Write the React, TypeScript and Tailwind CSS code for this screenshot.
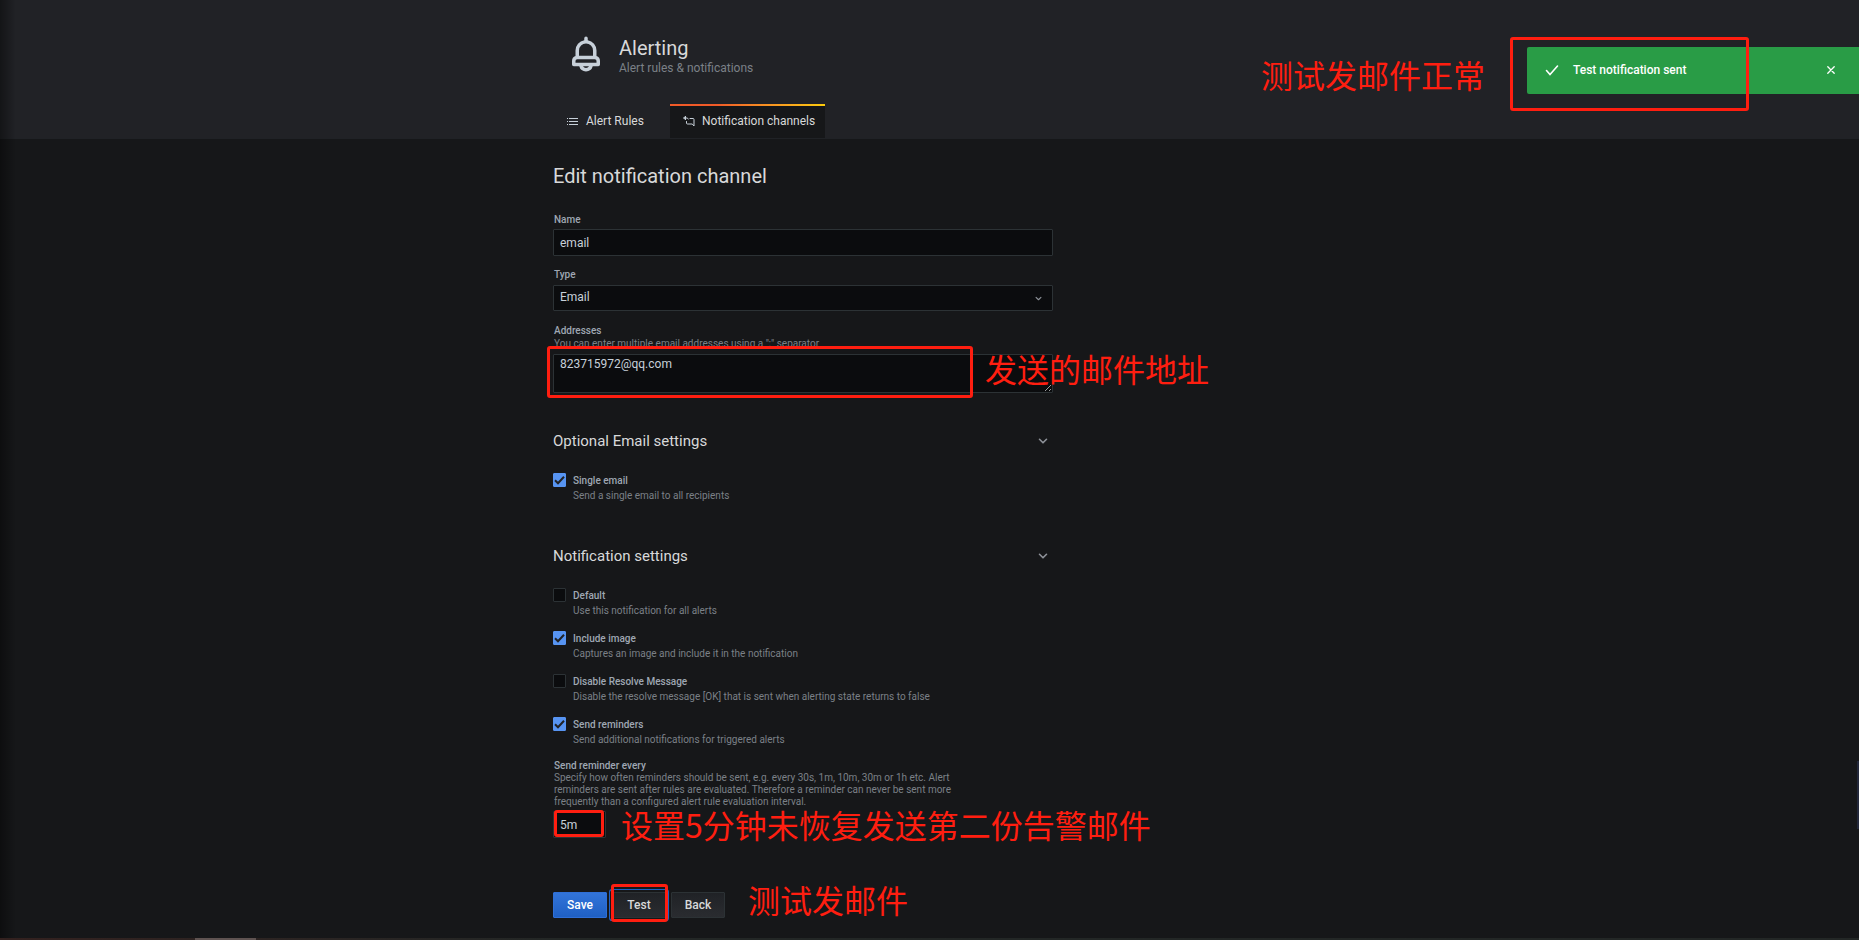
import type { ReactNode } from "react";

const BELL =
  "M18,13.18V10a6,6,0,0,0-5-5.91V3a1,1,0,0,0-2,0V4.09A6,6,0,0,0,6,10v3.18A3,3,0,0,0,4,16v2a1,1,0,0,0,1,1H8.14a4,4,0,0,0,7.72,0H19a1,1,0,0,0,1-1V16A3,3,0,0,0,18,13.18ZM8,10a4,4,0,0,1,8,0v3H8Zm4,10a2,2,0,0,1-1.72-1h3.44A2,2,0,0,1,12,20Zm6-3H6V16a1,1,0,0,1,1-1H17a1,1,0,0,1,1,1Z";

function ListIcon() {
  return (
    <svg viewBox="0 0 12 12" className="h-3 w-3" fill="#c7d0d9">
      <path d="M0 3h1v1H0zM2 3h9v1H2zM0 6h1v1H0zM2 6h9v1H2zM0 9h1v1H0zM2 9h9v1H2z" />
    </svg>
  );
}

function ChannelsIcon() {
  return (
    <svg viewBox="0 0 24 24" className="h-3 w-3" fill="none" stroke="#c7d0d9" strokeWidth="2" strokeLinecap="round" strokeLinejoin="round">
      <path d="M5 2.5 1.5 6 5 9.5M1.5 6H8a3 3 0 0 1 2.5 2M5 3v6" />
      <path d="M14 7h6a2 2 0 0 1 2 2v13l-3.5-4H9a2 2 0 0 1-2-2v-3" />
    </svg>
  );
}

function Chevron({ className }: { className: string }) {
  return (
    <svg viewBox="0 0 10 10" className={className} fill="none" stroke="#8e9299" strokeWidth="1.6" strokeLinecap="round" strokeLinejoin="round">
      <path d="m1.5 3.3 3.5 3.5 3.5-3.5" />
    </svg>
  );
}

function Section({ title, children }: { title: string; children: ReactNode }) {
  return (
    <section>
      <button type="button" className="flex h-6 w-full items-center justify-between pr-[5px] text-[15px]">
        {title}
        <Chevron className="h-[10px] w-[10px]" />
      </button>
      {children}
    </section>
  );
}

function Check({ id, label, hint, checked }: { id: string; label: string; hint: string; checked?: boolean }) {
  return (
    <div className="flex h-[43px] items-start gap-[7px]">
      <span className="grid shrink-0">
        <input
          id={id}
          type="checkbox"
          defaultChecked={checked}
          className="peer col-start-1 row-start-1 h-[14px] w-[13px] appearance-none rounded-[1px] border border-[#2c3235] bg-[#0b0c0e] checked:border-[#5794f2] checked:bg-[#5794f2]"
        />
        <svg
          viewBox="0 0 13 14"
          className="pointer-events-none col-start-1 row-start-1 hidden h-[14px] w-[13px] peer-checked:block"
          fill="none"
          stroke="#202226"
          strokeWidth="2"
        >
          <path d="m2 7.2 3 3 6-6.4" />
        </svg>
      </span>
      <div>
        <label htmlFor={id} className="block leading-[15px] font-medium text-[#9fa7b3]">
          {label}
        </label>
        <p className="leading-4 text-[#7b8087]">{hint}</p>
      </div>
    </div>
  );
}

function Note({ className, children }: { className: string; children: string }) {
  return (
    <p className={`pointer-events-none absolute font-['Noto_Sans_CJK_SC',sans-serif] text-[32px] leading-10 whitespace-nowrap text-[#ff1e10] ${className}`}>
      {children}
    </p>
  );
}

function Frame({ className }: { className: string }) {
  return <div className={`pointer-events-none absolute rounded-[3px] border-[3px] border-[#ff1e10] ${className}`} />;
}

const field = "w-full rounded-[1px] border border-[#2c3235] bg-[#0b0c0e] px-[6px] text-xs text-[#c7d0d9] outline-none";
const labelStyle = "block pl-px leading-3 font-medium text-[#9fa7b3]";
const button = "h-[26px] w-[54px] rounded-[1px] border text-xs font-medium";

export default function App() {
  return (
    <div className="relative flex min-h-screen flex-col overflow-hidden bg-[#161719] font-['Roboto',sans-serif] text-[10px] text-[#d8d9da]">
      <header className="border-b border-[#202226] bg-[#212226]">
        <div className="mx-auto w-full max-w-[753px]">
          <div className="flex h-[104px] gap-3 pt-[33px] pl-3">
            <svg viewBox="0 0 24 24" className="h-[42px] w-[42px]" fill="#c7d0d9">
              <path d={BELL} />
            </svg>
            <div className="pt-[3px]">
              <h1 className="text-xl leading-6">Alerting</h1>
              <p className="text-xs leading-4 text-[#7b8087]">Alert rules &amp; notifications</p>
            </div>
          </div>
          <nav className="flex h-[34px] pl-[1px] text-xs text-[#d8d9da]">
            <a href="#rules" className="flex w-[116px] items-center gap-[7px] pl-[13px]">
              <ListIcon />
              Alert Rules
            </a>
            <a href="#channels" className="flex w-[155px] flex-col bg-[#161719]">
              <span className="h-[2px] w-full bg-linear-to-r from-[#f05a28] from-30% to-[#fbca0a]" />
              <span className="flex flex-1 items-center gap-[7px] pb-[2px] pl-[13px] whitespace-nowrap">
                <ChannelsIcon />
                Notification channels
              </span>
            </a>
          </nav>
        </div>
      </header>

      <main className="mx-auto w-full max-w-[753px] flex-1 pt-[25px]">
        <form className="max-w-[500px]">
          <h2 className="text-xl leading-6">Edit notification channel</h2>

          <div className="mt-[26px]">
            <label htmlFor="name" className={labelStyle}>
              Name
            </label>
            <input id="name" defaultValue="email" className={`mt-[3px] h-[27px] ${field}`} />
          </div>

          <div className="mt-[13px]">
            <label htmlFor="type" className={labelStyle}>
              Type
            </label>
            <div className="mt-1 grid items-center">
              <select id="type" className={`col-start-1 row-start-1 h-[26px] appearance-none pb-[3px] ${field}`}>
                <option>Email</option>
              </select>
              <Chevron className="pointer-events-none col-start-1 row-start-1 mr-[11px] h-[7px] w-[7px] justify-self-end" />
            </div>
          </div>

          <div className="mt-[14px]">
            <label htmlFor="addresses" className={labelStyle}>
              Addresses
            </label>
            <p className="pl-px leading-[14px] text-[#7b8087]">You can enter multiple email addresses using a ";" separator</p>
            <textarea id="addresses" defaultValue="823715972@qq.com" className={`mt-[3px] block h-[39px] pt-px leading-4 ${field}`} />
          </div>

          <div className="mt-9">
            <Section title="Optional Email settings">
              <div className="pt-5">
                <Check id="single" label="Single email" hint="Send a single email to all recipients" checked />
              </div>
            </Section>
          </div>

          <div className="mt-7">
            <Section title="Notification settings">
              <div className="pt-5">
                <Check id="default" label="Default" hint="Use this notification for all alerts" />
                <Check id="image" label="Include image" hint="Captures an image and include it in the notification" checked />
                <Check id="resolve" label="Disable Resolve Message" hint="Disable the resolve message [OK] that is sent when alerting state returns to false" />
                <Check id="reminders" label="Send reminders" hint="Send additional notifications for triggered alerts" checked />
              </div>
              <label htmlFor="every" className={labelStyle}>
                Send reminder every
              </label>
              <p className="w-[410px] pl-px leading-3 text-[#7b8087]">
                Specify how often reminders should be sent, e.g. every 30s, 1m, 10m, 30m or 1h etc. Alert reminders are sent after rules are
                evaluated. Therefore a reminder can never be sent more frequently than a configured alert rule evaluation interval.
              </p>
              <div className="mt-[3px] w-[53px]">
                <input id="every" defaultValue="5m" className={`h-[27px] ${field}`} />
              </div>
            </Section>
          </div>

          <div className="mt-[54px] flex gap-[5px]">
            <button type="button" className={`border-[#2f6fd6] bg-linear-to-b from-[#3274d9] to-[#1f60c4] text-white ${button}`}>
              Save
            </button>
            <button
              type="button"
              className={`border-[#2c3235] bg-linear-to-b from-[#202226] to-[#2a2c30] shadow-[0_0_0_2px_#161719,0_0_0_3px_#1f60c4] ${button}`}
            >
              Test
            </button>
            <button type="button" className={`border-[#2c3235] bg-linear-to-b from-[#202226] to-[#2a2c30] ${button}`}>
              Back
            </button>
          </div>
        </form>
      </main>

      <div role="status" className="absolute top-[47px] right-0 flex h-[47px] w-[332px] items-center rounded-l-[2px] bg-[#299c46] pb-[2px] text-xs font-medium text-white">
        <svg viewBox="0 0 14 12" className="ml-[18px] h-3 w-[14px]" fill="none" stroke="white" strokeWidth="1.6" strokeLinecap="round">
          <path d="m1.5 6.5 3.5 4 7.5-8.5" />
        </svg>
        <span className="ml-[14px] flex-1">Test notification sent</span>
        <button type="button" aria-label="Close" className="mr-6">
          <svg viewBox="0 0 8 8" className="h-2 w-2" stroke="white" strokeWidth="1.3" strokeLinecap="round">
            <path d="m.8.8 6.4 6.4M7.2.8.8 7.2" />
          </svg>
        </button>
      </div>

      <Frame className="top-[37px] right-[110px] h-[74px] w-[239px]" />
      <Note className="top-[54px] right-[374px]">测试发邮件正常</Note>
      <div className="pointer-events-none absolute inset-0 mx-auto w-[753px]">
        <Frame className="top-[346px] -left-[6px] h-[52px] w-[426px]" />
        <Note className="top-[348px] left-[432px]">发送的邮件地址</Note>
        <Frame className="top-[810px] left-[1px] h-[27px] w-[50px]" />
        <Note className="top-[804px] left-[68px]">设置5分钟未恢复发送第二份告警邮件</Note>
        <Frame className="top-[884px] left-[58px] h-[38px] w-[57px]" />
        <Note className="top-[879px] left-[195px]">测试发邮件</Note>
      </div>

      <div className="pointer-events-none absolute inset-y-0 left-0 w-4 bg-linear-to-r from-black/40 to-transparent" />
      <div className="absolute right-0 bottom-[111px] h-[68px] w-[2px] bg-[#23283a]" />
      <div className="absolute inset-x-0 bottom-0 flex h-[2px] bg-linear-to-r from-[#33211f] to-[#232726] to-30%">
        <div className="ml-[195px] w-[61px] bg-[#5f5351]" />
      </div>
    </div>
  );
}
